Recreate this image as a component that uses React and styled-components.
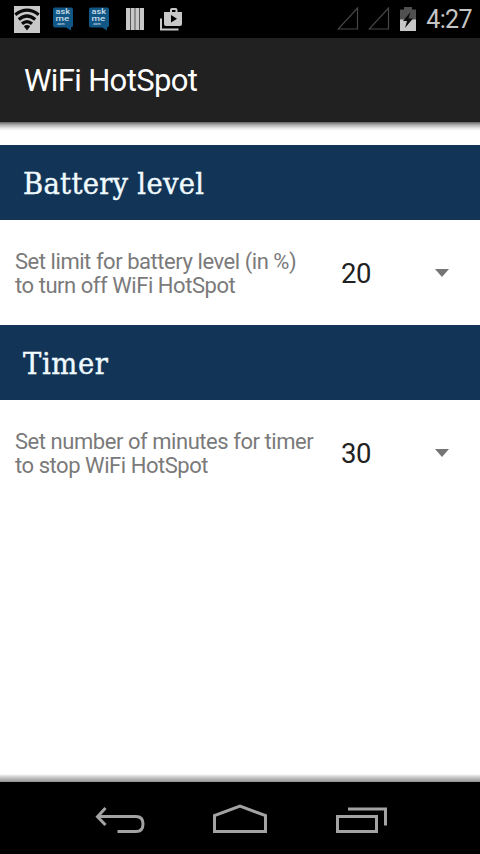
import { useState } from 'react';
import styled, { createGlobalStyle } from 'styled-components';

const GlobalStyle = createGlobalStyle`
  body {
    margin: 0;
    background: #fff;
    font-family: Roboto, sans-serif;
  }
`;

const Screen = styled.div`
  display: flex;
  flex-direction: column;
  height: 100vh;
  overflow: hidden;
`;

const StatusBar = styled.div`
  display: flex;
  align-items: center;
  justify-content: space-between;
  height: 38px;
  flex: none;
  padding: 0 8px 0 14px;
  background: #000;
`;

const StatusGroup = styled.div`
  display: flex;
  align-items: center;
`;

const StatusIcon = styled.svg`
  display: block;
  flex: none;
  margin-left: ${(props) => props.$gap || 0}px;
`;

const BubbleText = styled.text`
  font-family: Roboto, sans-serif;
  font-size: ${(props) => props.$size}px;
  font-weight: 500;
  fill: #c9dbe5;
`;

const Clock = styled.span`
  margin-left: 10px;
  padding-top: 1px;
  font-size: 25px;
  line-height: 38px;
  letter-spacing: -0.6px;
  color: #c4c4c4;
`;

const ActionBar = styled.header`
  display: flex;
  align-items: center;
  height: 84px;
  flex: none;
  padding-left: 24px;
  background: #212121;
`;

const Title = styled.h1`
  margin: 2px 0 0;
  font-size: 31px;
  line-height: 36px;
  font-weight: 400;
  letter-spacing: -0.65px;
  color: #fff;
`;

const Shadow = styled.div`
  height: ${(props) => props.$height}px;
  flex: none;
  background: ${(props) => props.$fill};
`;

const Content = styled.main`
  flex: 1;
  padding-top: 14px;
`;

const SectionTitle = styled.h2`
  height: 75px;
  margin: 0;
  padding: 1px 0 0 23px;
  box-sizing: border-box;
  background: #123456;
  font-family: 'DejaVu Serif Condensed', 'DejaVu Serif', serif;
  font-stretch: condensed;
  font-size: 30.5px;
  font-weight: 400;
  line-height: 75px;
  letter-spacing: ${(props) => props.$spacing}px;
  color: #f0fbff;
  -webkit-text-stroke: 0.4px #f0fbff;
`;

const Row = styled.div`
  display: flex;
  align-items: center;
  height: 105px;
  padding: 0 31px 0 15px;
  box-sizing: border-box;
`;

const Description = styled.p`
  width: 326px;
  flex: none;
  margin: 2px 0 0;
  font-size: 22px;
  line-height: 24px;
  letter-spacing: -0.45px;
  white-space: pre-line;
  color: #7a7a7a;
`;

const Spinner = styled.button`
  display: flex;
  align-items: center;
  justify-content: space-between;
  flex: 1;
  padding: 0;
  border: none;
  background: none;
  font-family: inherit;
  color: #212121;
  cursor: pointer;
`;

const SpinnerValue = styled.span`
  padding-top: 2px;
  font-size: 27.5px;
  line-height: 32px;
  letter-spacing: -0.5px;
`;

const NavBar = styled.nav`
  display: flex;
  align-items: flex-start;
  height: 72px;
  flex: none;
  padding: 22px 0 0 95px;
  box-sizing: border-box;
  background: #000;
`;

const NavButton = styled.button`
  margin-right: ${(props) => props.$gap || 0}px;
  padding: 0;
  border: none;
  background: none;
  cursor: pointer;

  svg {
    display: block;
  }
`;

const WifiIcon = () => (
  <StatusIcon width="26" height="27" viewBox="0 0 26 27">
    <rect width="26" height="27" fill="#c8c8c8" />
    <g fill="none" stroke="#0a0a0a" strokeWidth="3.3">
      <path d="M1.3 8.7Q13-0.4 24.7 8.7" />
      <path d="M4.8 13.4Q13 6.6 21.2 13.4" />
      <path d="M8 17.8Q13 13.4 18 17.8" />
    </g>
    <path d="M9.8 20.3Q13 17.8 16.2 20.3L13 24.5Z" fill="#0a0a0a" />
  </StatusIcon>
);

const AskMeIcon = ({ gap }) => (
  <StatusIcon $gap={gap} width="20" height="24" viewBox="0 0 20 24">
    <path d="M2 0.5H18Q20 0.5 20 2.5V18.5Q20 20.5 18 20.5V23.5L13 20.5H2Q0 20.5 0 18.5V2.5Q0 0.5 2 0.5Z" fill="#105785" />
    <BubbleText $size={7.5} transform="translate(2.5 7) scale(1.22 1)">ask</BubbleText>
    <BubbleText $size={7.5} transform="translate(2.5 13.5) scale(1.3 0.9)">me</BubbleText>
    <BubbleText $size={3} x="3.5" y="17.8" textLength="8" lengthAdjust="spacingAndGlyphs">.com</BubbleText>
  </StatusIcon>
);

const BarsIcon = () => (
  <StatusIcon $gap={17} width="18" height="22" viewBox="0 0 18 22">
    <rect width="18" height="22" fill="#c8c8c8" />
    <path d="M4.5 0V22M9 0V22M13.5 0V22" stroke="#555" strokeWidth="1" />
  </StatusIcon>
);

const PlayStoreIcon = () => (
  <StatusIcon $gap={16} width="23" height="23" viewBox="0 0 23 23">
    <path d="M1 10.5V21.5H18.5" fill="none" stroke="#c8c8c8" strokeWidth="2" />
    <path
      fillRule="evenodd"
      fill="#c8c8c8"
      d="M4 4H10V2Q10 0 12 0H15.5Q17.5 0 17.5 2V4H22V16Q22 18 20 18H6Q4 18 4 16ZM12 2V4H15.5V2ZM11 7V14.5L17 10.8Z"
    />
  </StatusIcon>
);

const SignalIcon = ({ gap }) => (
  <StatusIcon $gap={gap} width="23" height="24" viewBox="0 0 23 24">
    <path d="M1.2 22H20.5V1Z" fill="none" stroke="#484848" strokeWidth="1.2" />
  </StatusIcon>
);

const BatteryIcon = () => (
  <StatusIcon $gap={9} width="16" height="24" viewBox="0 0 16 24">
    <path d="M0 2.5H4V0H12V2.5H16V24H0Z" fill="#505050" />
    <rect y="12.5" width="16" height="11.5" fill="#c8c8c8" />
    <path d="M10.5 5L3 14H7L5 21L13 11.5H8.5Z" fill="#0c0c0c" />
  </StatusIcon>
);

const sections = [
  {
    title: 'Battery level',
    text: 'Set limit for battery level (in %)\nto turn off WiFi HotSpot',
    options: [20, 30, 40, 50],
    spacing: 0.28,
  },
  {
    title: 'Timer',
    text: 'Set number of minutes for timer\nto stop WiFi HotSpot',
    options: [30, 45, 60],
    spacing: 0.6,
  },
];

function Setting({ section }) {
  const [index, setIndex] = useState(0);
  const { title, text, options, spacing } = section;

  return (
    <section>
      <SectionTitle $spacing={spacing}>{title}</SectionTitle>
      <Row>
        <Description>{text}</Description>
        <Spinner onClick={() => setIndex((index + 1) % options.length)}>
          <SpinnerValue>{options[index]}</SpinnerValue>
          <svg width="14" height="8" viewBox="0 0 14 8">
            <path d="M0 0H14L7 8Z" fill="#757575" />
          </svg>
        </Spinner>
      </Row>
    </section>
  );
}

export default function App() {
  return (
    <Screen>
      <GlobalStyle />
      <StatusBar>
        <StatusGroup>
          <WifiIcon />
          <AskMeIcon gap={13} />
          <AskMeIcon gap={16} />
          <BarsIcon />
          <PlayStoreIcon />
        </StatusGroup>
        <StatusGroup>
          <SignalIcon />
          <SignalIcon gap={8} />
          <BatteryIcon />
          <Clock>4:27</Clock>
        </StatusGroup>
      </StatusBar>
      <ActionBar>
        <Title>WiFi HotSpot</Title>
      </ActionBar>
      <Shadow $height={9} $fill="linear-gradient(#636363, #b4b4b4 35%, #eee 75%, #fff)" />
      <Content>
        {sections.map((section) => (
          <Setting key={section.title} section={section} />
        ))}
      </Content>
      <Shadow $height={8} $fill="linear-gradient(#fff, #d0d0d0 35%, #929292)" />
      <NavBar>
        <NavButton $gap={67} aria-label="Back">
          <svg width="51" height="30" viewBox="0 0 51 30" fill="none" stroke="#a3a3a3" strokeWidth="3">
            <path d="M10.5 4L2.5 12.7L10.5 21M3 12.5H41Q48 12.5 48 20Q48 27.5 41 27.5H22.5" />
          </svg>
        </NavButton>
        <NavButton $gap={69} aria-label="Home">
          <svg width="54" height="30" viewBox="0 0 54 30" fill="none" stroke="#a3a3a3" strokeWidth="3">
            <path d="M1.5 27.5V11.5L27 2.2L52.5 11.5V27.5Z" />
          </svg>
        </NavButton>
        <NavButton aria-label="Recent apps">
          <svg width="51" height="30" viewBox="0 0 51 30" fill="none" stroke="#a3a3a3" strokeWidth="3">
            <path d="M1.5 12.5H40.5V27.5H1.5ZM12 5H49.5V21.5" />
          </svg>
        </NavButton>
      </NavBar>
    </Screen>
  );
}
